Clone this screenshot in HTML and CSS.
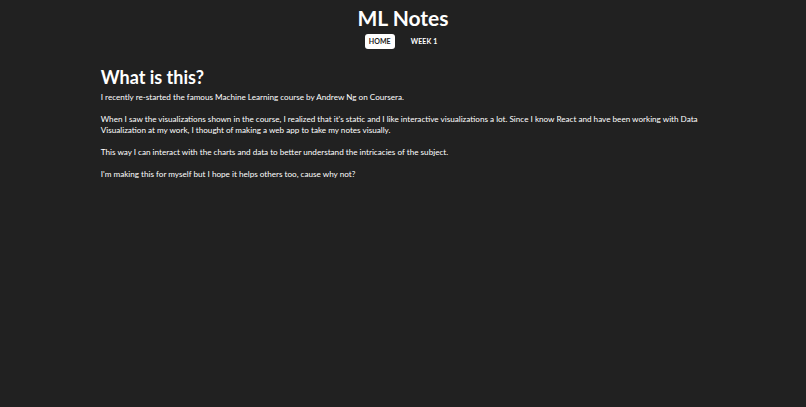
FILE: index.html
```html
<!DOCTYPE html>
<html>
<head>
<meta charset="utf-8">
<link rel="stylesheet" href="styles.css">
</head>
<body>
<header class="header">
  <h1 class="title">ML Notes</h1>
  <nav class="nav">
    <a class="nav-link active">HOME</a>
    <a class="nav-link">WEEK 1</a>
  </nav>
</header>
<main class="content">
  <h2 class="heading">What is this?</h2>
  <p>I recently re-started the famous Machine Learning course by Andrew Ng on Coursera.</p>
  <p>When I saw the visualizations shown in the course, I realized that it's static and I like interactive visualizations a lot. Since I know React and have been working with Data Visualization at my work, I thought of making a web app to take my notes visually.</p>
  <p>This way I can interact with the charts and data to better understand the intricacies of the subject.</p>
  <p>I'm making this for myself but I hope it helps others too, cause why not?</p>
</main>
</body>
</html>
```
FILE: styles.css
```css
html, body {
  margin: 0;
  padding: 0;
  background: #212121;
  color: #ffffff;
  font-family: "Lato", "Noto Sans", sans-serif;
}
.header {
  display: flex;
  flex-direction: column;
  align-items: center;
  padding-top: 6px;
}
.title {
  margin: 0;
  font-size: 21px;
  font-weight: 700;
  line-height: 24px;
}
.nav {
  display: flex;
  gap: 12px;
  margin-top: 4px;
}
.nav-link {
  font-size: 7px;
  font-weight: 700;
  padding: 4px 4px;
  border-radius: 3px;
  line-height: 7px;
  color: #ffffff;
  letter-spacing: 0.1px;
}
.nav-link.active {
  background: #ffffff;
  color: #212121;
}
.content {
  width: 75%;
  margin: 0 auto;
  padding-top: 17px;
}
.heading {
  margin: 0 0 4px;
  font-size: 18px;
  line-height: 22px;
  font-weight: 700;
}
.content p {
  margin: 0 0 11px;
  font-size: 8.15px;
  line-height: 11px;
}
```
